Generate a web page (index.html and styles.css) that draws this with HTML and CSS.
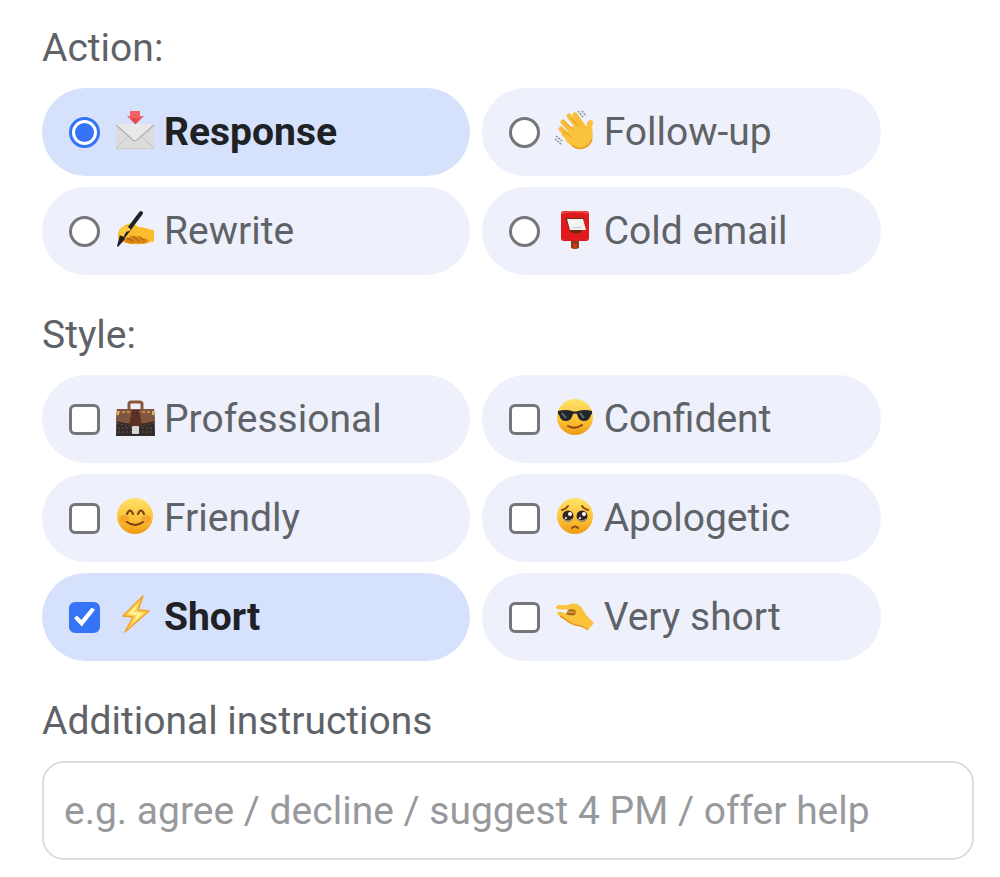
FILE: index.html
```html
<!DOCTYPE html>
<html lang="en">
<head>
    <meta charset="UTF-8">
    <meta name="viewport" content="width=device-width, initial-scale=1">
    <title>Email assistant</title>
    <link rel="stylesheet" href="styles.css">
</head>
<body>
    <form class="panel">
        <!-- Action -->
        <fieldset class="group">
            <legend class="title">Action:</legend>
            <div class="options">
                <label class="option">
                    <input type="radio" name="action" value="response" checked>
                    <svg class="icon" viewBox="0 0 40 40" aria-hidden="true">
                        <rect x="1" y="12" width="38" height="25" rx="1" fill="#dcdcdd"/>
                        <path d="M1 36 15 23M39 36 25 23" stroke="#bfc0c3" fill="none"/>
                        <path d="M1 12h38L22 28q-2 1.500-4 0z" fill="#e9e9ea"/>
                        <path d="M1 13 18 28q2 1.500 4 0L39 13" stroke="#b3b4b7" stroke-width="1.500" fill="none"/>
                        <path d="M1 36.500h38" stroke="#d1cdc4"/>
                        <path d="M15-1h10v5h4l-8.500 8.500L12 4h3z" fill="#f16264"/>
                        <path d="M15 6h10l-4.500 6z" fill="#e64a4f"/>
                    </svg>
                    <span>Response</span>
                </label>
                <label class="option">
                    <input type="radio" name="action" value="follow-up">
                    <svg class="icon" viewBox="0 0 40 40" aria-hidden="true">
                        <g stroke="#f9bd35" stroke-width="5" stroke-linecap="round" fill="none">
                            <path d="m8 10 12 13M14 4l12 15M20 3l9 13M6 17l12 12M9 22l10 9"/>
                        </g>
                        <path d="M14 15 26 13l4 4c2-2 1-5 3-8 2-2 6-1 5 2-2 6 1 11-1 17-2 7-7 9-12 9-6 0-10-4-15-9z" fill="#fbc33d"/>
                        <path d="M17 33c6 6 17 4 20-6" stroke="#ec9c25" stroke-width="1.500" fill="none"/>
                        <path d="m10 10 9 9M16 6l8 9M9 19l8 7" stroke="#e59d2b" fill="none"/>
                        <path d="m23-1 5 6M27-1l4 5M1 24l6 5M0 27l7 6" stroke="#8c8f93" stroke-width="1.500" stroke-dasharray="2 1" fill="none"/>
                    </svg>
                    <span>Follow-up</span>
                </label>
                <label class="option">
                    <input type="radio" name="action" value="rewrite">
                    <svg class="icon" viewBox="0 0 40 40" aria-hidden="true">
                        <path d="M3 28c0-5 0-9 4-12 4-2 8-5 12-3 3 1 3 3 6 3 5 0 9 3 14 3v12c-5-1-6 3-12 2-5 0-11 1-15-1l-6-1z" fill="#fabd2d"/>
                        <path d="M10 31c-2-2 1-5 4-4 1-3 5-3 7-1 2-2 6-1 7 2 3-1 5 0 5 2-3 3-8 3-12 2-4 1-8 1-11-1z" fill="#d98419"/>
                        <path d="m12 27 6 3m1-4 5 4m2-3 3 2" stroke="#9a540f" fill="none"/>
                        <path d="M26 2 8 26" stroke="#202124" stroke-width="4" stroke-linecap="round"/>
                        <path d="m5 24 5 4-7 8-1-1z" fill="#202124"/>
                        <path d="M5 24c-1-5 2-8 6-8 3 0 5 1 4 4-3 0-5 1-6 6" fill="#fcc944"/>
                    </svg>
                    <span>Rewrite</span>
                </label>
                <label class="option">
                    <input type="radio" name="action" value="cold-email">
                    <svg class="icon" viewBox="0 0 40 40" aria-hidden="true">
                        <path d="M16 29h8v8q-4 2-8 0z" fill="#8f3d17"/>
                        <rect x="6" y="0" width="28" height="30" rx="3" fill="#df1b1e"/>
                        <path d="M7 2q13-3 26 0" stroke="#f05550" stroke-width="1.500" fill="none"/>
                        <path d="M10 7h19l-2 13q-6 5-12 0z" fill="#6e2818"/>
                        <path d="M12 8h16l3 11H15z" fill="#f3f3f2"/>
                        <path d="m17 17 10-1" stroke="#c8c8c8"/>
                        <circle cx="20" cy="35" r="2" fill="#d7391f"/>
                    </svg>
                    <span>Cold email</span>
                </label>
            </div>
        </fieldset>

        <!-- Style -->
        <fieldset class="group">
            <legend class="title">Style:</legend>
            <div class="options">
                <label class="option">
                    <input type="checkbox" name="style" value="professional">
                    <svg class="icon" viewBox="0 0 40 40" aria-hidden="true">
                        <path d="M14 11V5q0-2 2-2h9q2 0 2 2v6" stroke="#8a5738" stroke-width="3" fill="none"/>
                        <path d="M2 10h37q1 13 1 27H1q0-14 1-27z" fill="#332a2b"/>
                        <path d="M2 10h37l1 12q-20 6-39 0z" fill="#80563f"/>
                        <path d="M2 13h36" stroke="#c08c4b" stroke-width="2" stroke-dasharray="3 2"/>
                        <path d="M2 24q18 6 37 0M3 29h34M3 33h34" stroke="#765139" stroke-dasharray="2 2" fill="none"/>
                        <path d="M17 11h7l3 16H14z" fill="#5b3024"/>
                        <rect x="17" y="27" width="7" height="8" rx="1" fill="#d6d7da"/>
                        <path d="M3 12v4M38 12v4" stroke="#e7b157" stroke-width="2"/>
                    </svg>
                    <span>Professional</span>
                </label>
                <label class="option">
                    <input type="checkbox" name="style" value="confident">
                    <svg class="icon" viewBox="0 0 40 40" aria-hidden="true">
                        <defs>
                            <linearGradient id="face" x1="0" y1="0" x2="0" y2="1">
                                <stop offset="0" stop-color="#ffe36c"/>
                                <stop offset="0.6" stop-color="#fbc034"/>
                                <stop offset="1" stop-color="#ee9915"/>
                            </linearGradient>
                        </defs>
                        <circle cx="20" cy="18" r="18" fill="url(#face)"/>
                        <path d="M3 12q8-2 14 0 3 1 6 0 7-2 14 0v3c-2 0-1 7-8 7-5 0-6-4-7-7q-2-1-4 0c-1 3-2 7-7 7-7 0-6-7-8-7z" fill="#24262b"/>
                        <path d="m7 14 4 5M25 14l4 5" stroke="#666a70" stroke-width="2"/>
                        <path d="M13 27q7 4 14-1" stroke="#8b4413" stroke-width="2" stroke-linecap="round" fill="none"/>
                    </svg>
                    <span>Confident</span>
                </label>
                <label class="option">
                    <input type="checkbox" name="style" value="friendly">
                    <svg class="icon" viewBox="0 0 40 40" aria-hidden="true">
                        <circle cx="20" cy="18" r="18" fill="url(#face)"/>
                        <ellipse cx="9" cy="21" rx="5" ry="4" fill="#f28b2c" opacity="0.5"/>
                        <ellipse cx="31" cy="21" rx="5" ry="4" fill="#f28b2c" opacity="0.5"/>
                        <g stroke="#7b3b10" stroke-width="2" stroke-linecap="round" fill="none">
                            <path d="M12 16q3-7 6 0M23 16q3-7 6 0M12 24q8 6 16 0"/>
                        </g>
                    </svg>
                    <span>Friendly</span>
                </label>
                <label class="option">
                    <input type="checkbox" name="style" value="apologetic">
                    <svg class="icon" viewBox="0 0 40 40" aria-hidden="true">
                        <circle cx="20" cy="18" r="18" fill="url(#face)"/>
                        <circle cx="13" cy="18" r="5.500" fill="#302723"/>
                        <circle cx="27" cy="18" r="5.500" fill="#302723"/>
                        <g fill="#fff">
                            <circle cx="15" cy="16" r="2"/>
                            <circle cx="11" cy="20" r="1"/>
                            <circle cx="29" cy="16" r="2"/>
                            <circle cx="25" cy="20" r="1"/>
                        </g>
                        <path d="M9 21q4 4 8 0M23 21q4 4 8 0" stroke="#a6b0b8" fill="none"/>
                        <path d="M7 12q4-1 6-4M33 12q-4-1-6-4M17 30q3-3 6 0" stroke="#8b4a13" stroke-width="2" stroke-linecap="round" fill="none"/>
                    </svg>
                    <span>Apologetic</span>
                </label>
                <label class="option">
                    <input type="checkbox" name="style" value="short" checked>
                    <svg class="icon" viewBox="0 0 40 40" aria-hidden="true">
                        <path d="M28-1 8 19l10 1-8 15 24-21-11-1z" fill="#ffd34d" stroke="#f2a129" stroke-width="1.500" stroke-linejoin="round"/>
                        <path d="M23 6 13 17l9 1-5 9 11-11-9-1z" fill="#fff1a2"/>
                    </svg>
                    <span>Short</span>
                </label>
                <label class="option">
                    <input type="checkbox" name="style" value="very-short">
                    <svg class="icon" viewBox="0 0 40 40" aria-hidden="true">
                        <path d="M2 9c2-2 7 0 11-1 4-2 8-2 12 1 4 4 5 8 8 11l6 6-6 7c-4-4-8-4-12-5-8-1-12-7-18-10-2-2 0-4 3-3l7 2 2-4C10 12 5 13 3 12 1 12 0 10 2 9z" fill="#fbc33a"/>
                        <path d="M13 13c3-1 6-1 8 1l-1 4c-3 1-7 0-9-1z" fill="#a4681e"/>
                        <path d="M12 15h8" stroke="#e6a12b" stroke-width="1.500"/>
                        <path d="M5 19c6 3 9 8 16 9 4 1 8 1 12 5" stroke="#e39a27" stroke-width="1.500" fill="none"/>
                    </svg>
                    <span>Very short</span>
                </label>
            </div>
        </fieldset>

        <!-- Additional instructions -->
        <div class="group">
            <label class="title" for="instructions">Additional instructions</label>
            <input class="field" id="instructions" type="text" placeholder="e.g. agree / decline / suggest 4 PM / offer help">
        </div>
    </form>
</body>
</html>
```
FILE: styles.css
```css
* {
    box-sizing: border-box;
}
body {
    margin: 0;
    background-color: #fff;
    color: #5f6368;
    font-family: Roboto, "Liberation Sans", sans-serif;
    font-size: 39px;
    line-height: 48px;
}
.panel {
    display: flex;
    flex-direction: column;
    gap: 36px;
    padding: 24px 26px 16px 42px;
}
.group {
    min-width: 0;
    margin: 0;
    padding: 0;
    border: 0;
}
.title {
    display: block;
    padding: 0 0 16px;
}
.options {
    display: grid;
    grid-template-columns: 15fr 14fr;
    gap: 11px 12px;
    width: 90%;
}
.option {
    display: flex;
    align-items: center;
    height: 88px;
    padding-left: 27px;
    border-radius: 44px;
    background-color: #eef1fb;
    white-space: nowrap;
    cursor: pointer;
}
.option:has(input:checked) {
    background-color: #d6e1fc;
    color: #202124;
    font-weight: 700;
}
.option input {
    appearance: none;
    flex: none;
    display: grid;
    place-items: center;
    width: 31px;
    height: 31px;
    margin: 0 15px 0 0;
    border: 3px solid #747679;
    background-color: #fff;
}
.option input[type="radio"] {
    border-radius: 50%;
}
.option input[type="checkbox"] {
    border-radius: 6px;
}
.option input:checked {
    border-color: #3574f6;
}
.option input[type="radio"]:checked::before {
    content: "";
    width: 19px;
    height: 19px;
    border-radius: 50%;
    background-color: #3574f6;
}
.option input[type="checkbox"]:checked {
    background-color: #3574f6;
}
/* tick */
.option input[type="checkbox"]:checked::before {
    content: "";
    width: 21px;
    height: 19px;
    background-color: #fff;
    clip-path: polygon(0 56%, 14% 42%, 35% 66%, 84% 0, 100% 12%, 37% 100%);
}
.icon {
    flex: none;
    width: 40px;
    height: 40px;
    margin-right: 9px;
    overflow: visible;
}
.field {
    display: block;
    width: 100%;
    height: 99px;
    padding: 0 20px;
    border: 2px solid #dadce0;
    border-radius: 22px;
    background-color: #fff;
    color: #202124;
    font: inherit;
}
.field::placeholder {
    color: #98999c;
    opacity: 1;
}
```
